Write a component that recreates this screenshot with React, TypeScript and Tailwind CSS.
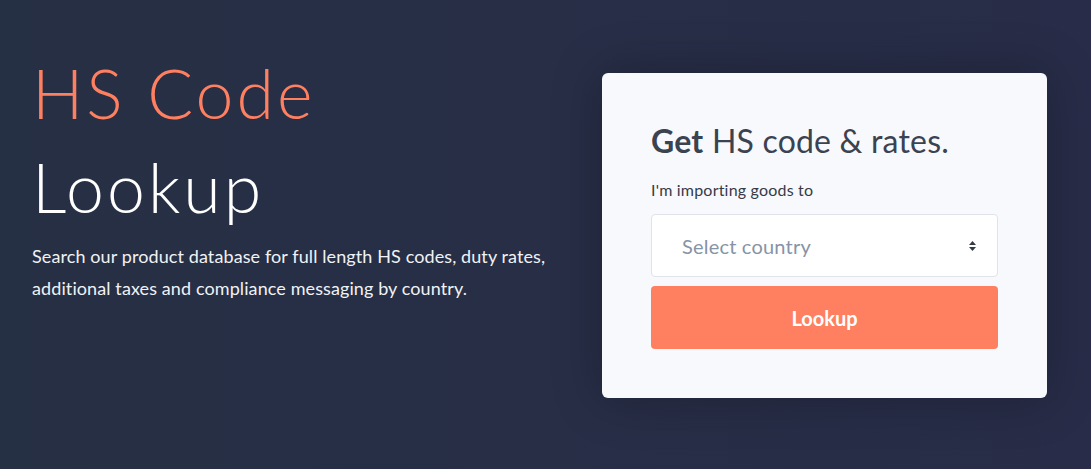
import { useState } from "react";

const font = { fontFamily: '"Lato", "Noto Sans", sans-serif' };

function SortArrows() {
  return (
    <svg width="9" height="12" viewBox="0 0 9 12" className="text-[#343a46]">
      <path d="M4.5 1 L8 5 H1 Z" fill="currentColor" />
      <path d="M4.5 11 L8 7 H1 Z" fill="currentColor" />
    </svg>
  );
}

function LookupCard() {
  const [country, setCountry] = useState("");

  return (
    <div className="mr-[44px] mt-[73px] flex h-[325px] w-[445px] shrink-0 flex-col rounded-md bg-[#f8f9fd] px-[49px] pt-[48px] shadow-[0_0_50px_rgba(0,0,0,0.25)]">
      <h2 className="text-[32px] leading-[40px] tracking-[0.2px] text-[#3b4250]">
        <span className="font-bold">Get</span> HS code &amp; rates.
      </h2>
      <label className="mt-[19px] text-[16px] leading-5 tracking-[0.2px] text-[#363b47]">I'm importing goods to</label>
      <div className="relative mt-[14px] h-[63px] w-full rounded border border-[#dfe3ea] bg-white">
        <select
          value={country}
          onChange={(e) => setCountry(e.target.value)}
          className="h-full w-full appearance-none bg-transparent pl-[30px] text-[20px] tracking-[0.2px] text-[#8793a6] outline-none"
          style={font}
        >
          <option value="">Select country</option>
          <option value="US">United States</option>
          <option value="GB">United Kingdom</option>
          <option value="AU">Australia</option>
        </select>
        <span className="pointer-events-none absolute right-[20px] top-[25px]">
          <SortArrows />
        </span>
      </div>
      <button
        className="mt-[9px] h-[63px] w-full rounded bg-[#ff7f61] text-[20px] font-bold text-white"
        style={font}
      >
        Lookup
      </button>
    </div>
  );
}

export default function App() {
  return (
    <div
      className="flex h-[469px] w-full justify-between overflow-hidden bg-gradient-to-r from-[#263044] to-[#282c48] pl-[32px]"
      style={font}
    >
      <div className="w-[550px] pt-[46px]">
        <h1 className="text-[68px] font-light leading-[94px] tracking-[3px]">
          <span className="block text-[#ff7f61]">HS Code</span>
          <span className="block text-white">Lookup</span>
        </h1>
        <p className="mt-[6px] text-[18px] leading-[32px] tracking-[0.1px] text-[#f1f2f5]">
          Search our product database for full length HS codes, duty rates, additional taxes and compliance messaging by
          country.
        </p>
      </div>
      <LookupCard />
    </div>
  );
}
